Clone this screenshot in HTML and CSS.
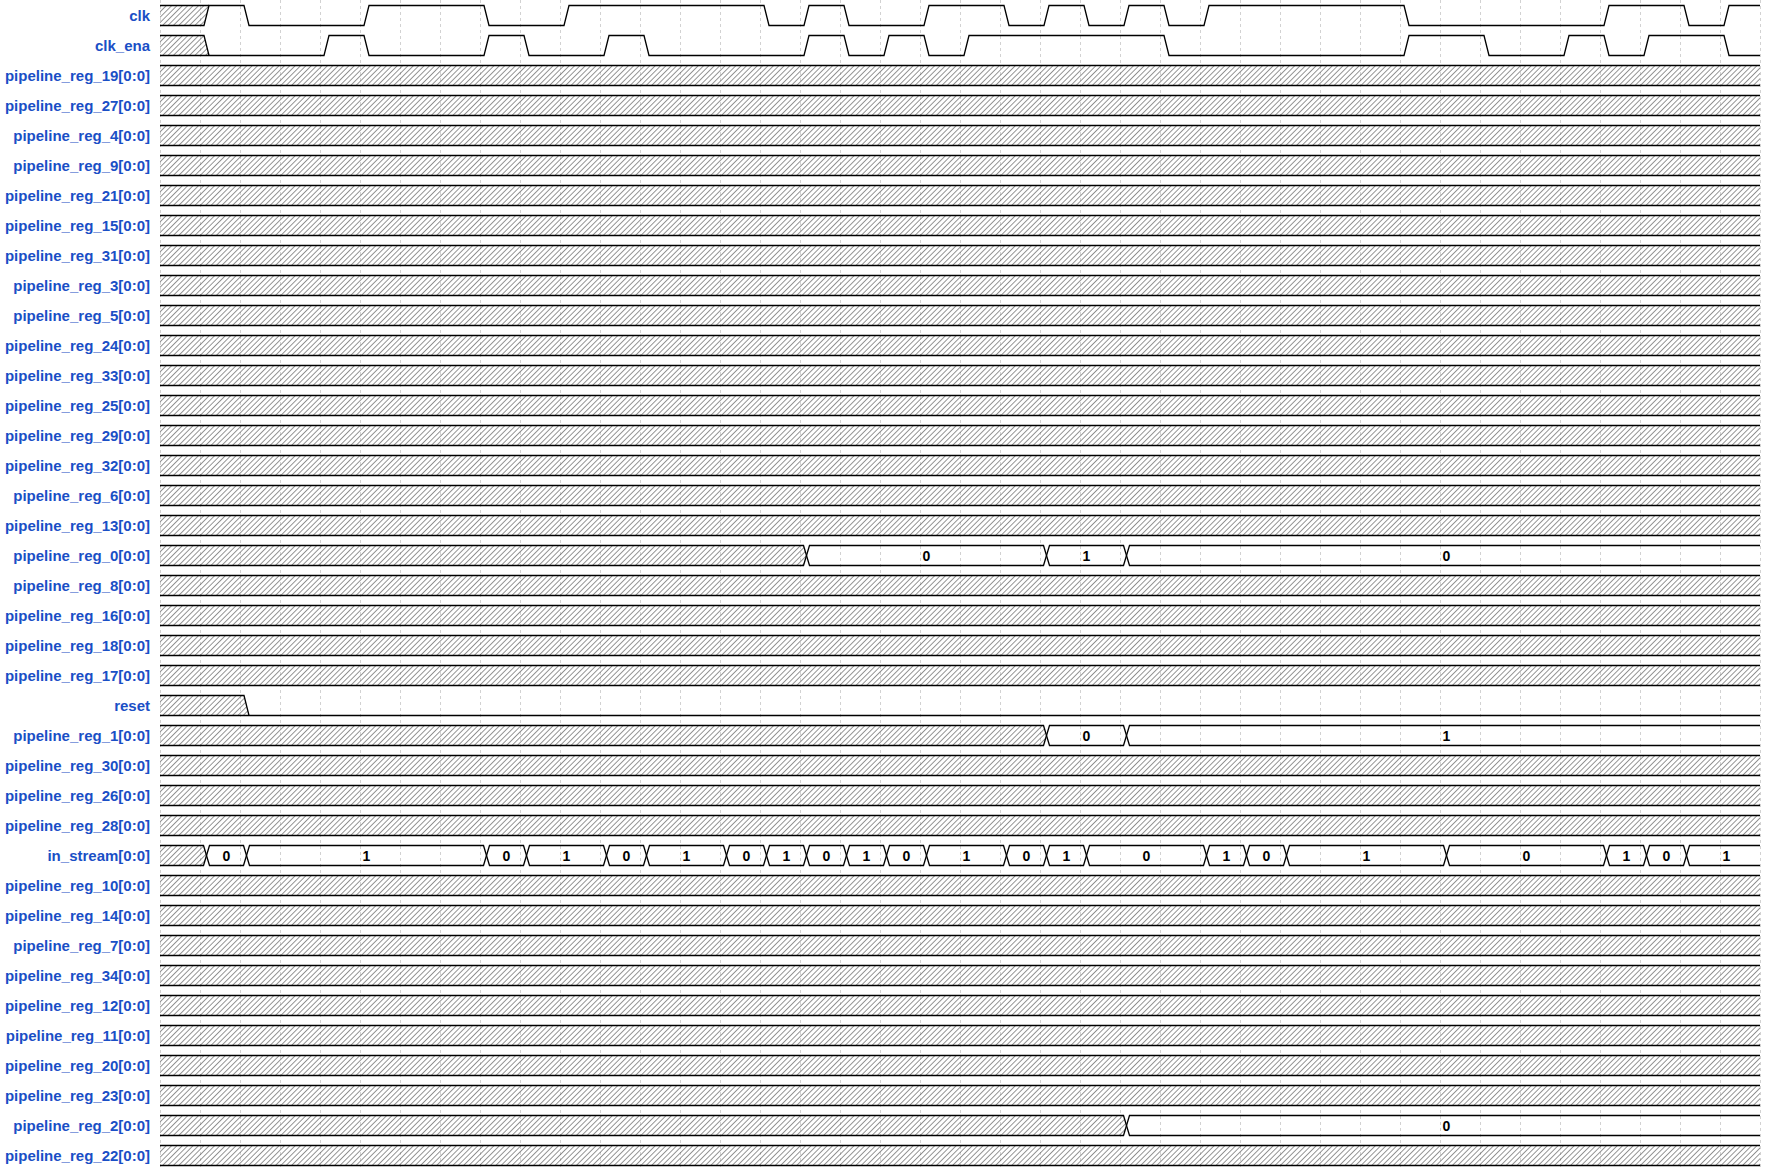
FILE: index.html
```html
<!DOCTYPE html>
<html>
<head>
<meta charset="utf-8">
<link rel="stylesheet" href="styles.css">
</head>
<body>
<div class="wave">
  <div class="labels">
    <div class="lbl">clk</div>
    <div class="lbl">clk_ena</div>
    <div class="lbl">pipeline_reg_19[0:0]</div>
    <div class="lbl">pipeline_reg_27[0:0]</div>
    <div class="lbl">pipeline_reg_4[0:0]</div>
    <div class="lbl">pipeline_reg_9[0:0]</div>
    <div class="lbl">pipeline_reg_21[0:0]</div>
    <div class="lbl">pipeline_reg_15[0:0]</div>
    <div class="lbl">pipeline_reg_31[0:0]</div>
    <div class="lbl">pipeline_reg_3[0:0]</div>
    <div class="lbl">pipeline_reg_5[0:0]</div>
    <div class="lbl">pipeline_reg_24[0:0]</div>
    <div class="lbl">pipeline_reg_33[0:0]</div>
    <div class="lbl">pipeline_reg_25[0:0]</div>
    <div class="lbl">pipeline_reg_29[0:0]</div>
    <div class="lbl">pipeline_reg_32[0:0]</div>
    <div class="lbl">pipeline_reg_6[0:0]</div>
    <div class="lbl">pipeline_reg_13[0:0]</div>
    <div class="lbl">pipeline_reg_0[0:0]</div>
    <div class="lbl">pipeline_reg_8[0:0]</div>
    <div class="lbl">pipeline_reg_16[0:0]</div>
    <div class="lbl">pipeline_reg_18[0:0]</div>
    <div class="lbl">pipeline_reg_17[0:0]</div>
    <div class="lbl">reset</div>
    <div class="lbl">pipeline_reg_1[0:0]</div>
    <div class="lbl">pipeline_reg_30[0:0]</div>
    <div class="lbl">pipeline_reg_26[0:0]</div>
    <div class="lbl">pipeline_reg_28[0:0]</div>
    <div class="lbl">in_stream[0:0]</div>
    <div class="lbl">pipeline_reg_10[0:0]</div>
    <div class="lbl">pipeline_reg_14[0:0]</div>
    <div class="lbl">pipeline_reg_7[0:0]</div>
    <div class="lbl">pipeline_reg_34[0:0]</div>
    <div class="lbl">pipeline_reg_12[0:0]</div>
    <div class="lbl">pipeline_reg_11[0:0]</div>
    <div class="lbl">pipeline_reg_20[0:0]</div>
    <div class="lbl">pipeline_reg_23[0:0]</div>
    <div class="lbl">pipeline_reg_2[0:0]</div>
    <div class="lbl">pipeline_reg_22[0:0]</div>
  </div>
  <svg class="canvas" width="1620" height="1170" viewBox="0 0 1620 1170" xmlns="http://www.w3.org/2000/svg">
    <defs>
      <pattern id="h" patternUnits="userSpaceOnUse" width="3.8" height="10" patternTransform="rotate(45)">
        <line x1="0" y1="0" x2="0" y2="10" class="hl"/>
      </pattern>
      <g id="hr">
        <rect x="0" y="5" width="1600" height="20" fill="url(#h)"/>
        <path class="sig" d="M0,5H1600M0,25H1600"/>
      </g>
    </defs>
    <path class="grid" d="M0.5,0V1170M40.5,0V1170M80.5,0V1170M120.5,0V1170M160.5,0V1170M200.5,0V1170M240.5,0V1170M280.5,0V1170M320.5,0V1170M360.5,0V1170M400.5,0V1170M440.5,0V1170M480.5,0V1170M520.5,0V1170M560.5,0V1170M600.5,0V1170M640.5,0V1170M680.5,0V1170M720.5,0V1170M760.5,0V1170M800.5,0V1170M840.5,0V1170M880.5,0V1170M920.5,0V1170M960.5,0V1170M1000.5,0V1170M1040.5,0V1170M1080.5,0V1170M1120.5,0V1170M1160.5,0V1170M1200.5,0V1170M1240.5,0V1170M1280.5,0V1170M1320.5,0V1170M1360.5,0V1170M1400.5,0V1170M1440.5,0V1170M1480.5,0V1170M1520.5,0V1170M1560.5,0V1170M1600.5,0V1170"/>

    <!-- clk -->
    <g transform="translate(0,0.5)">
      <polygon points="0,5 49,5 44,25 0,25" fill="url(#h)"/>
      <path class="sig" d="M0,5H49"/>
      <path class="sig" d="M0,25H44L49,5H84L89,25H204L209,5H324L329,25H404L409,5H604L609,25H644L649,5H684L689,25H764L769,5H844L849,25H884L889,5H924L929,25H964L969,5H1004L1009,25H1044L1049,5H1244L1249,25H1444L1449,5H1524L1529,25H1564L1569,5H1600"/>
    </g>
    <!-- clk_ena -->
    <g transform="translate(0,30.5)">
      <polygon points="0,5 44,5 49,25 0,25" fill="url(#h)"/>
      <path class="sig" d="M0,5H44L49,25"/>
      <path class="sig" d="M0,25H164L169,5H204L209,25H324L329,5H364L369,25H444L449,5H484L489,25H644L649,5H684L689,25H724L729,5H764L769,25H804L809,5H1004L1009,25H1244L1249,5H1324L1329,25H1404L1409,5H1444L1449,25H1484L1489,5H1564L1569,25H1600"/>
    </g>

    <use href="#hr" y="60.5"/>
    <use href="#hr" y="90.5"/>
    <use href="#hr" y="120.5"/>
    <use href="#hr" y="150.5"/>
    <use href="#hr" y="180.5"/>
    <use href="#hr" y="210.5"/>
    <use href="#hr" y="240.5"/>
    <use href="#hr" y="270.5"/>
    <use href="#hr" y="300.5"/>
    <use href="#hr" y="330.5"/>
    <use href="#hr" y="360.5"/>
    <use href="#hr" y="390.5"/>
    <use href="#hr" y="420.5"/>
    <use href="#hr" y="450.5"/>
    <use href="#hr" y="480.5"/>
    <use href="#hr" y="510.5"/>

    <!-- pipeline_reg_0 -->
    <g transform="translate(0,540.5)">
      <polygon points="0,5 643.5,5 646.5,15 643.5,25 0,25" fill="url(#h)"/>
      <path class="sig" d="M0,5H643.5L649.5,25H883.5L889.5,5H963.5L969.5,25H1600"/>
      <path class="sig" d="M0,25H643.5L649.5,5H883.5L889.5,25H963.5L969.5,5H1600"/>
      <text class="val" x="766.5" y="20">0</text>
      <text class="val" x="926.5" y="20">1</text>
      <text class="val" x="1286.5" y="20">0</text>
    </g>

    <use href="#hr" y="570.5"/>
    <use href="#hr" y="600.5"/>
    <use href="#hr" y="630.5"/>
    <use href="#hr" y="660.5"/>

    <!-- reset -->
    <g transform="translate(0,690.5)">
      <polygon points="0,5 84,5 89,25 0,25" fill="url(#h)"/>
      <path class="sig" d="M0,5H84L89,25"/>
      <path class="sig" d="M0,25H1600"/>
    </g>

    <!-- pipeline_reg_1 -->
    <g transform="translate(0,720.5)">
      <polygon points="0,5 883.5,5 886.5,15 883.5,25 0,25" fill="url(#h)"/>
      <path class="sig" d="M0,5H883.5L889.5,25H963.5L969.5,5H1600"/>
      <path class="sig" d="M0,25H883.5L889.5,5H963.5L969.5,25H1600"/>
      <text class="val" x="926.5" y="20">0</text>
      <text class="val" x="1286.5" y="20">1</text>
    </g>

    <use href="#hr" y="750.5"/>
    <use href="#hr" y="780.5"/>
    <use href="#hr" y="810.5"/>

    <!-- in_stream -->
    <g transform="translate(0,840.5)">
      <polygon points="0,5 43.5,5 46.5,15 43.5,25 0,25" fill="url(#h)"/>
      <path class="sig" d="M0,5H43.5L49.5,25H83.5L89.5,5H323.5L329.5,25H363.5L369.5,5H443.5L449.5,25H483.5L489.5,5H563.5L569.5,25H603.5L609.5,5H643.5L649.5,25H683.5L689.5,5H723.5L729.5,25H763.5L769.5,5H843.5L849.5,25H883.5L889.5,5H923.5L929.5,25H1043.5L1049.5,5H1083.5L1089.5,25H1123.5L1129.5,5H1283.5L1289.5,25H1443.5L1449.5,5H1483.5L1489.5,25H1523.5L1529.5,5H1600"/>
      <path class="sig" d="M0,25H43.5L49.5,5H83.5L89.5,25H323.5L329.5,5H363.5L369.5,25H443.5L449.5,5H483.5L489.5,25H563.5L569.5,5H603.5L609.5,25H643.5L649.5,5H683.5L689.5,25H723.5L729.5,5H763.5L769.5,25H843.5L849.5,5H883.5L889.5,25H923.5L929.5,5H1043.5L1049.5,25H1083.5L1089.5,5H1123.5L1129.5,25H1283.5L1289.5,5H1443.5L1449.5,25H1483.5L1489.5,5H1523.5L1529.5,25H1600"/>
      <text class="val" x="66.5" y="20">0</text>
      <text class="val" x="206.5" y="20">1</text>
      <text class="val" x="346.5" y="20">0</text>
      <text class="val" x="406.5" y="20">1</text>
      <text class="val" x="466.5" y="20">0</text>
      <text class="val" x="526.5" y="20">1</text>
      <text class="val" x="586.5" y="20">0</text>
      <text class="val" x="626.5" y="20">1</text>
      <text class="val" x="666.5" y="20">0</text>
      <text class="val" x="706.5" y="20">1</text>
      <text class="val" x="746.5" y="20">0</text>
      <text class="val" x="806.5" y="20">1</text>
      <text class="val" x="866.5" y="20">0</text>
      <text class="val" x="906.5" y="20">1</text>
      <text class="val" x="986.5" y="20">0</text>
      <text class="val" x="1066.5" y="20">1</text>
      <text class="val" x="1106.5" y="20">0</text>
      <text class="val" x="1206.5" y="20">1</text>
      <text class="val" x="1366.5" y="20">0</text>
      <text class="val" x="1466.5" y="20">1</text>
      <text class="val" x="1506.5" y="20">0</text>
      <text class="val" x="1566.5" y="20">1</text>
    </g>

    <use href="#hr" y="870.5"/>
    <use href="#hr" y="900.5"/>
    <use href="#hr" y="930.5"/>
    <use href="#hr" y="960.5"/>
    <use href="#hr" y="990.5"/>
    <use href="#hr" y="1020.5"/>
    <use href="#hr" y="1050.5"/>
    <use href="#hr" y="1080.5"/>

    <!-- pipeline_reg_2 -->
    <g transform="translate(0,1110.5)">
      <polygon points="0,5 963.5,5 966.5,15 963.5,25 0,25" fill="url(#h)"/>
      <path class="sig" d="M0,5H963.5L969.5,25H1600"/>
      <path class="sig" d="M0,25H963.5L969.5,5H1600"/>
      <text class="val" x="1286.5" y="20">0</text>
    </g>

    <use href="#hr" y="1140.5"/>
  </svg>
</div>
</body>
</html>
```

FILE: styles.css
```css
html, body {
  margin: 0;
  padding: 0;
  background: #ffffff;
}

.wave {
  display: flex;
  flex-direction: row;
  width: 1780px;
  height: 1170px;
  overflow: hidden;
}

.labels {
  flex: none;
  width: 160px;
  display: flex;
  flex-direction: column;
}

.lbl {
  height: 30px;
  line-height: 32px;
  padding-right: 10px;
  text-align: right;
  white-space: nowrap;
  font-family: "Liberation Sans", Arial, sans-serif;
  font-weight: bold;
  font-size: 15px;
  color: #1a4fc6;
}

.canvas {
  flex: none;
  display: block;
}

.grid {
  fill: none;
  stroke: #d2d2d2;
  stroke-width: 1;
  stroke-dasharray: 3 3;
}

.hl {
  stroke: #2a2a2a;
  stroke-width: 1;
}

.sig {
  fill: none;
  stroke: #000000;
  stroke-width: 1.3;
  stroke-linejoin: miter;
}

.val {
  font-family: "Liberation Sans", Arial, sans-serif;
  font-weight: bold;
  font-size: 14px;
  text-anchor: middle;
  fill: #000000;
}
```
